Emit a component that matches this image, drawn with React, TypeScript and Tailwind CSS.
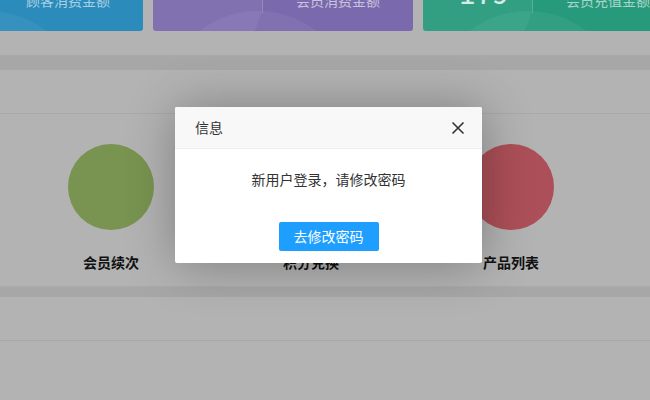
import { ReactNode } from 'react';

interface StatCardProps {
    label: string;
    color: string;
    value?: ReactNode;
}

function StatCard({ label, color, value }: StatCardProps) {
    return (
        <div className={`relative w-[260px] h-[100px] flex-shrink-0 rounded-[3px] overflow-hidden ${color}`}>
            {/* decorative circles */}
            <div className="absolute -left-[40px] -top-[10px] w-[150px] h-[150px] rounded-full bg-white/[0.05]" />
            <div className="absolute left-[10px] top-[80px] w-[190px] h-[190px] rounded-full bg-white/[0.05]" />

            <div className="relative flex h-full pt-[19px] pb-[18px]">
                <div className="w-[110px] flex items-end pl-[36px] border-r border-white/20">
                    {value && <span className="text-[30px] leading-none text-white/80 mb-[7px]">{value}</span>}
                </div>
                <div className="flex-1 flex items-end justify-end pr-[33px] pb-[3px]">
                    <span className="text-[14px] leading-[20px] text-white/60">{label}</span>
                </div>
            </div>
        </div>
    );
}

interface ShortcutProps {
    label: string;
    color: string;
}

function Shortcut({ label, color }: ShortcutProps) {
    return (
        <div className="w-[200px] flex flex-col items-center">
            <div className={`w-[86px] h-[86px] rounded-full ${color}`} />
            <div className="mt-[22px] text-[14px] leading-[20px] font-bold text-[#111]">{label}</div>
        </div>
    );
}

export default function App() {
    return (
        <div
            className="relative w-[650px] h-[400px] overflow-hidden bg-[#b3b3b3]"
            style={{ fontFamily: '"Noto Sans CJK SC", "Noto Sans", sans-serif' }}
        >
            {/* page, dimmed by the layer mask */}
            <div className="flex flex-col">
                {/* stat cards, scrolled partly out of view */}
                <div className="pb-[24px] border-b border-[#a9a9a9]">
                    <div className="flex gap-[10px] -ml-[117px] -mt-[69px]">
                        <StatCard label="顾客消费金额" color="bg-[#2b8bbb]" />
                        <StatCard label="会员消费金额" color="bg-[#7b69ad]" />
                        <StatCard label="会员充值金额" color="bg-[#279a7c]" value="179" />
                    </div>
                </div>

                <div className="h-[14px] bg-[#a7a7a7]" />

                {/* shortcuts panel */}
                <div className="h-[44px] border-b border-[#a9a9a9]" />
                <div className="h-[173px] border-b border-[#aaaaaa] pt-[30px] pl-[11px] flex">
                    <Shortcut label="会员续次" color="bg-[#789450]" />
                    <Shortcut label="积分兑换" color="bg-[#5a8fb8]" />
                    <Shortcut label="产品列表" color="bg-[#ad4f58]" />
                </div>

                <div className="h-[10px] bg-[#a7a7a7]" />

                <div className="h-[44px] border-b border-[#a9a9a9]" />
                <div className="flex-1" />
            </div>

            {/* dialog */}
            <div className="absolute left-[175px] top-[107px] w-[307px] bg-white rounded-[2px] shadow-[1px_1px_50px_rgba(0,0,0,0.3)]">
                <div className="h-[42px] flex items-center justify-between pl-[20px] pr-[17px] bg-[#f8f8f8] border-b border-[#eeeeee] rounded-t-[2px]">
                    <span className="text-[14px] text-[#333]">信息</span>
                    <svg width="14" height="14" viewBox="0 0 14 14" className="text-[#333]">
                        <path d="M1.5 1.5 L12.5 12.5 M12.5 1.5 L1.5 12.5" stroke="currentColor" strokeWidth="1.6" fill="none" />
                    </svg>
                </div>
                <div className="pt-[18px] pb-[21px] text-center text-[14px] leading-[24px] text-[#333]">
                    新用户登录，请修改密码
                </div>
                <div className="flex justify-center pt-[10px] pb-[12px]">
                    <button className="h-[29px] px-[15px] bg-[#1e9fff] text-white text-[14px] leading-[29px] rounded-[2px]">
                        去修改密码
                    </button>
                </div>
            </div>
        </div>
    );
}
